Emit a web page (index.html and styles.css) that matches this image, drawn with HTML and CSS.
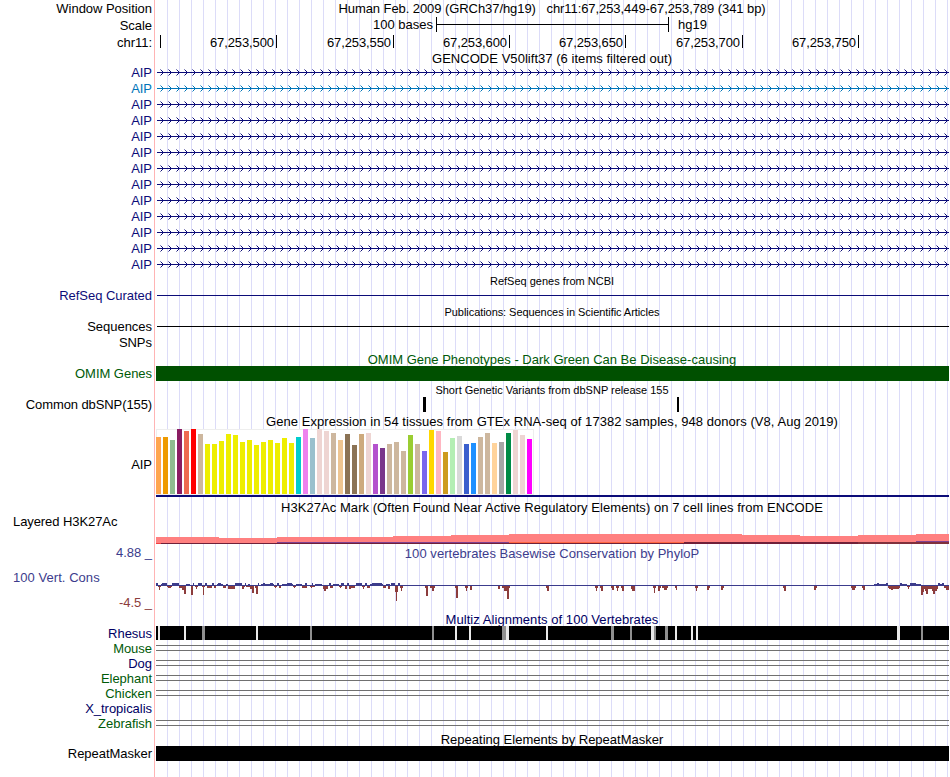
FILE: index.html
```html
<!DOCTYPE html>
<html lang="en">
<head>
  <meta charset="UTF-8" />
  <title>Human chr11:67,253,449-67,253,789</title>
  <link rel="stylesheet" href="styles.css">
</head>
<body>
  <svg class="defs" width="0" height="0">
    <defs>
      <pattern id="arrows" width="8" height="16" patternUnits="userSpaceOnUse">
        <path class="navy" d="M0 7h8v1h-8zM5 6h1v3h-1zM4 5h1v1h-1zM4 9h1v1h-1z"/>
        <path class="navy faint" d="M3 4h1v1h-1zM3 10h1v1h-1z"/>
      </pattern>
      <pattern id="arrows-blue" width="8" height="16" patternUnits="userSpaceOnUse">
        <path class="sky" d="M0 7h8v1h-8zM5 6h1v3h-1zM4 5h1v1h-1zM4 9h1v1h-1z"/>
        <path class="sky faint" d="M3 4h1v1h-1zM3 10h1v1h-1z"/>
      </pattern>
    </defs>
  </svg>

  <div class="browser">
    <div class="row ruler">
      <div class="label">Window Position</div>
      <div class="title position">Human Feb. 2009 (GRCh37/hg19) &nbsp; chr11:67,253,449-67,253,789 (341 bp)</div>
    </div>
    <div class="row ruler">
      <div class="label">Scale</div>
      <svg class="plot" width="793" height="17">
        <text class="end" x="277" y="12">100 bases</text>
        <path d="M280 0h1v15h-1zM512 0h1v15h-1zM281 7h231v1h-231z"/>
        <text x="522" y="12">hg19</text>
      </svg>
    </div>
    <div class="row">
      <div class="label chrom">chr11:</div>
      <svg class="plot" width="793" height="16" id="ticks"></svg>
    </div>

    <div class="row head"><div class="label"></div><div class="title gencode">GENCODE V50lift37 (6 items filtered out)</div></div>
    <div id="genes"></div>

    <div class="row head"><div class="label"></div><div class="title small">RefSeq genes from NCBI</div></div>
    <div class="row">
      <div class="label c-navy">RefSeq Curated</div>
      <svg class="plot" width="793" height="16"><rect class="navy" x="1" y="7" width="792" height="1"/></svg>
    </div>

    <div class="row head"><div class="label"></div><div class="title small pubs">Publications: Sequences in Scientific Articles</div></div>
    <div class="row">
      <div class="label">Sequences</div>
      <svg class="plot" width="793" height="16"><rect x="1" y="7" width="792" height="1"/></svg>
    </div>
    <div class="row"><div class="label">SNPs</div></div>

    <div class="row head"><div class="label"></div><div class="title c-green">OMIM Gene Phenotypes - Dark Green Can Be Disease-causing</div></div>
    <div class="row">
      <div class="label c-green">OMIM Genes</div>
      <svg class="plot" width="793" height="16"><rect class="omim-bar" width="793" height="15"/></svg>
    </div>

    <div class="row head"><div class="label"></div><div class="title small">Short Genetic Variants from dbSNP release 155</div></div>
    <div class="row">
      <div class="label dbsnp">Common dbSNP(155)</div>
      <svg class="plot" width="793" height="16"><path d="M267 0h3v15h-3zM521 0h2v15h-2z"/></svg>
    </div>

    <div class="row"><div class="label"></div><div class="title wide">Gene Expression in 54 tissues from GTEx RNA-seq of 17382 samples, 948 donors (V8, Aug 2019)</div></div>
    <div class="row gtex">
      <div class="label">AIP</div>
      <svg class="plot" width="793" height="70" id="gtex"></svg>
    </div>

    <div class="row"><div class="label"></div><div class="title wide">H3K27Ac Mark (Often Found Near Active Regulatory Elements) on 7 cell lines from ENCODE</div></div>
    <div class="row histone">
      <div class="label left">Layered H3K27Ac</div>
      <svg class="plot" width="793" height="30">
        <path class="h3-pink" d="M0 22H63V23H121V22H237V21H295V20H353V19H586V20H644V21H702V20H760V19H793V29H0z"/>
        <path class="h3-red" d="M0 28h5v1h-5z"/>
        <path class="h3-purple" d="M121 27h232v1h-232zM760 26h33v1h-33z"/>
        <path class="h3-orange" d="M353 27h175v1h-175z"/>
        <path class="h3-dark" d="M5 28h697v1h-697zM528 27h174v1h-174z"/>
        <path class="h3-brown" d="M702 27h91v2h-91z"/>
      </svg>
    </div>

    <div class="row"><div class="label c-blue">4.88 _</div><div class="title c-blue wide">100 vertebrates Basewise Conservation by PhyloP</div></div>
    <div class="row phylop">
      <div class="label">
        <span class="c-blue name">100 Vert. Cons</span>
        <span class="c-red">-4.5 _</span>
      </div>
      <svg class="plot" width="793" height="50" id="phylop"></svg>
    </div>

    <div class="row head"><div class="label"></div><div class="title c-dark wide">Multiz Alignments of 100 Vertebrates</div></div>
    <div class="row species">
      <div class="label c-dark">Rhesus</div>
      <svg class="plot" width="793" height="15">
        <rect width="793" height="14"/>
        <path class="gap" d="M2 0h2v14h-2zM28 0h2v14h-2zM100 0h2v14h-2zM299 0h2v14h-2zM313 0h2v14h-2zM350 0h3v14h-3zM390 0h2v14h-2zM495 0h3v14h-3zM519 0h2v14h-2zM535 0h2v14h-2zM540 0h2v14h-2zM741 0h3v14h-3z"/>
        <path class="part" d="M46 0h3v14h-3zM154 0h2v14h-2zM276 0h2v14h-2zM346 0h4v14h-4zM455 0h3v14h-3zM474 0h2v14h-2zM498 0h2v14h-2zM509 0h3v14h-3zM765 0h2v14h-2z"/>
      </svg>
    </div>
    <div class="row species"><div class="label c-green">Mouse</div><div class="plot chain"></div></div>
    <div class="row species"><div class="label c-dark">Dog</div><div class="plot chain"></div></div>
    <div class="row species"><div class="label c-green">Elephant</div><div class="plot chain"></div></div>
    <div class="row species"><div class="label c-green">Chicken</div><div class="plot chain"></div></div>
    <div class="row species"><div class="label c-dark">X_tropicalis</div></div>
    <div class="row species"><div class="label c-green">Zebrafish</div><div class="plot chain"></div></div>

    <div class="row head"><div class="label"></div><div class="title">Repeating Elements by RepeatMasker</div></div>
    <div class="row last">
      <div class="label">RepeatMasker</div>
      <svg class="plot" width="793" height="31"><rect width="793" height="15"/></svg>
    </div>
  </div>

  <script src="script.js"></script>
</body>
</html>
```
FILE: styles.css
```css
body {
  margin: 0;
  background: #fff;
  color: #000;
  font-family: "Liberation Sans", Arial, sans-serif;
  font-size: 13px;
  line-height: 16px;
}
.defs {
  position: absolute;
}
.browser {
  width: 949px;
  height: 777px;
  overflow: hidden;
  background-image: linear-gradient(90deg, #dcdcf8 1px, transparent 1px);
  background-size: 12px 100%;
  background-position: 11px 0;
}
.row {
  display: flex;
  height: 16px;
}
.ruler { height: 17px; }
.head { height: 15px; }
.gtex { height: 70px; }
.histone { height: 30px; }
.phylop { height: 50px; }
.species { height: 15px; }
.last { height: 31px; }

.label {
  flex: none;
  box-sizing: border-box;
  width: 155px;
  margin-right: 1px;
  padding-right: 2px;
  border-right: 1px solid #ffb4b4;
  box-shadow: 1px 0 #fff;
  background: #fff;
  text-align: right;
  white-space: pre;
  letter-spacing: -0.03px;
}
.ruler .label { line-height: 17px; }
.species .label { line-height: 15px; }
.gtex .label { line-height: 71px; }
.label.chrom { line-height: 17px; }
.label.dbsnp { letter-spacing: -0.1px; }
.label.left {
  padding-left: 13px;
  text-align: left;
  line-height: 14px;
  letter-spacing: -0.08px;
}
.phylop .label {
  display: flex;
  flex-direction: column;
  justify-content: space-between;
  padding-top: 9px;
}
.phylop .name {
  padding-left: 13px;
  text-align: left;
  letter-spacing: 0.05px;
}
.plot {
  display: block;
  flex: none;
  width: 793px;
}
.title {
  width: 792px;
  text-align: center;
  white-space: nowrap;
  line-height: 18px;
}
.position { letter-spacing: -0.07px; }
.gencode { letter-spacing: 0.04px; }
.wide { letter-spacing: 0.05px; }
.small {
  font-size: 11px;
  line-height: 16px;
}
.pubs { letter-spacing: -0.06px; }

text { font-size: 13px; }
.end { text-anchor: end; }
.coord { letter-spacing: -0.1px; }

.c-navy { color: #0c0c78; }
.c-sky { color: #0074b8; }
.c-green { color: #005a08; }
.c-dark { color: #000064; }
.c-blue { color: #3c3c8c; }
.c-red { color: #8c3c3c; }

.navy { fill: #0c0c78; }
.sky { fill: #0074b8; }
.faint { opacity: 0.5; }
.omim-bar { fill: #005000; }
.frame { fill: #fff; stroke: #eee; }
.h3-pink { fill: #ff8080; }
.h3-red { fill: #f04040; }
.h3-purple { fill: #804090; }
.h3-orange { fill: #ff6640; }
.h3-dark { fill: #702038; }
.h3-brown { fill: #80303c; }
.up { fill: #3c3c8c; }
.down { fill: #8c3c3c; }
.gap { fill: #eaeaea; }
.part { fill: #909090; }

/* double line where the species has no aligning bases */
.chain {
  box-sizing: border-box;
  height: 6px;
  margin-top: 4px;
  border-top: 1px solid #707070;
  border-bottom: 1px solid #707070;
}
```
FILE: script.js
```
const NS = "http://www.w3.org/2000/svg";

function add(parent, tag, attrs, text) {
  const el = document.createElementNS(NS, tag);
  for (const key in attrs) el.setAttribute(key, attrs[key]);
  if (text) el.textContent = text;
  parent.appendChild(el);
}

// chromosome ruler
const ticks = document.getElementById("ticks");
[[4, ""], [120, "67,253,500"], [237, "67,253,550"], [353, "67,253,600"],
 [469, "67,253,650"], [586, "67,253,700"], [702, "67,253,750"]].forEach(([x, text]) => {
  add(ticks, "rect", { x: x, y: 1, width: 1, height: 13 });
  if (text) add(ticks, "text", { class: "end coord", x: x - 2, y: 13 }, text);
});

// transcripts, the second one is non-coding
let genes = "";
for (let i = 0; i < 13; i++) {
  const blue = i === 1;
  genes += `<div class="row"><div class="label ${blue ? "c-sky" : "c-navy"}">AIP</div>
    <svg class="plot" width="793" height="16"><g transform="translate(1 0)"><rect width="792" height="16" fill="url(#${blue ? "arrows-blue" : "arrows"})"/></g></svg></div>`;
}
document.getElementById("genes").innerHTML = genes;

// GTEx bars: colour, height
const tissues = [
  ["#ffa54f", 57], ["#ee9a00", 57], ["#8fbc8f", 54], ["#8b1c62", 65], ["#ee6a50", 63], ["#ff0000", 65],
  ["#cdb79e", 60], ["#eeee00", 50], ["#eeee00", 50], ["#eeee00", 53], ["#eeee00", 60], ["#eeee00", 59],
  ["#eeee00", 52], ["#eeee00", 54], ["#eeee00", 49], ["#eeee00", 52], ["#eeee00", 54], ["#eeee00", 51],
  ["#eeee00", 56], ["#eeee00", 51], ["#00cdcd", 57], ["#ee82ee", 65], ["#9ac0cd", 56], ["#eed5d2", 65],
  ["#eed5d2", 63], ["#cdb79e", 61], ["#eec591", 54], ["#8b7355", 60], ["#8b7355", 49], ["#cdaa7d", 60],
  ["#eed5d2", 61], ["#b452cd", 50], ["#7a378b", 46], ["#cdb79e", 50], ["#cdb79e", 52], ["#cdb79e", 43],
  ["#9acd32", 59], ["#cdb79e", 50], ["#7a67ee", 43], ["#ffd700", 64], ["#ffb6c1", 63], ["#cd9b1d", 42],
  ["#b4eeb4", 56], ["#d9d9d9", 58], ["#3a5fcd", 50], ["#1e90ff", 51], ["#cdb79e", 57], ["#cdb79e", 61],
  ["#ffd39b", 51], ["#a6a6a6", 52], ["#008b45", 61], ["#eed5d2", 64], ["#eed5d2", 59], ["#ff00ff", 55]
];
const gtex = document.getElementById("gtex");
add(gtex, "rect", { class: "frame", x: 0.5, y: 0.5, width: 377, height: 65 });
tissues.forEach(([fill, h], i) => {
  add(gtex, "rect", { x: i * 7, y: 65 - h, width: 5, height: h, fill: fill });
});
add(gtex, "rect", { class: "navy", x: 0, y: 66, width: 793, height: 2 });

// conservation scores: x, width, height
const up = [
  [0, 2, 2], [5, 1, 1], [6, 5, 2], [16, 7, 2], [30, 4, 1], [37, 1, 2], [42, 4, 2], [49, 2, 2], [56, 2, 2],
  [61, 6, 1], [62, 3, 2], [70, 2, 1], [79, 7, 2], [89, 1, 2], [92, 2, 1], [102, 1, 2], [105, 13, 1],
  [107, 2, 2], [114, 3, 2], [121, 2, 2], [126, 11, 1], [131, 5, 2], [140, 6, 1], [149, 2, 2], [156, 1, 2],
  [159, 7, 1], [173, 2, 2], [177, 6, 1], [185, 3, 2], [191, 2, 2], [200, 6, 2], [209, 2, 2],
  [214, 13, 1], [216, 10, 2], [230, 4, 1], [235, 4, 2], [242, 2, 2],
  [718, 14, 1], [721, 2, 2], [730, 2, 2], [744, 7, 1], [744, 2, 2], [754, 11, 1], [754, 6, 2],
  [782, 6, 1], [782, 2, 2], [786, 2, 2]
];
const down = [
  [2, 3, 1], [3, 1, 4], [11, 5, 1], [12, 3, 2], [23, 7, 2], [26, 4, 4], [28, 2, 8], [35, 2, 9], [39, 3, 1],
  [40, 1, 3], [46, 3, 1], [47, 1, 9], [51, 5, 2], [58, 2, 2], [67, 3, 2], [72, 7, 3], [86, 3, 1], [86, 2, 3],
  [90, 8, 1], [94, 4, 3], [96, 2, 7], [99, 3, 2], [100, 2, 8], [118, 3, 1], [119, 1, 2], [123, 2, 2],
  [137, 3, 1], [138, 1, 2], [146, 5, 2], [154, 5, 1], [155, 1, 2], [167, 5, 3], [168, 2, 5], [174, 3, 2],
  [183, 3, 1], [184, 1, 2], [189, 2, 3], [193, 6, 2], [193, 2, 3], [206, 3, 1], [207, 1, 3], [211, 3, 2],
  [227, 3, 2], [232, 2, 3], [239, 3, 6], [240, 1, 15], [244, 3, 2], [245, 1, 5],
  [269, 3, 2], [270, 2, 10], [274, 5, 2], [276, 2, 5], [299, 3, 2], [300, 2, 12], [309, 3, 2], [310, 1, 5],
  [314, 2, 4], [342, 2, 3], [346, 8, 2], [348, 4, 5], [351, 2, 13], [390, 3, 2], [391, 2, 5], [439, 3, 2],
  [440, 1, 5], [444, 3, 2], [445, 2, 5], [455, 3, 2], [456, 2, 4], [460, 3, 2], [461, 1, 5], [465, 3, 2],
  [466, 2, 5], [475, 4, 3], [476, 3, 5], [497, 3, 2], [498, 1, 7], [502, 3, 2], [502, 2, 5], [506, 6, 2],
  [508, 3, 4], [519, 2, 2], [520, 1, 4], [539, 3, 2], [540, 1, 5], [551, 3, 2], [551, 2, 4], [565, 3, 2],
  [565, 2, 4], [627, 3, 2], [628, 2, 5], [658, 3, 2], [658, 2, 4], [695, 5, 2], [696, 3, 4], [706, 3, 2],
  [707, 2, 4], [732, 12, 2], [733, 10, 3], [735, 2, 4], [751, 3, 1], [752, 1, 3], [765, 17, 3], [765, 2, 9],
  [767, 1, 6], [769, 3, 5], [770, 2, 8], [776, 5, 5], [777, 2, 8], [788, 5, 2], [790, 3, 4]
];
const phylop = document.getElementById("phylop");
add(phylop, "rect", { class: "up", x: 0, y: 24, width: 793, height: 1 });
up.forEach(([x, w, h]) => add(phylop, "rect", { class: "up", x: x, y: 24 - h, width: w, height: h }));
down.forEach(([x, w, h]) => add(phylop, "rect", { class: "down", x: x, y: 25, width: w, height: h }));
```
